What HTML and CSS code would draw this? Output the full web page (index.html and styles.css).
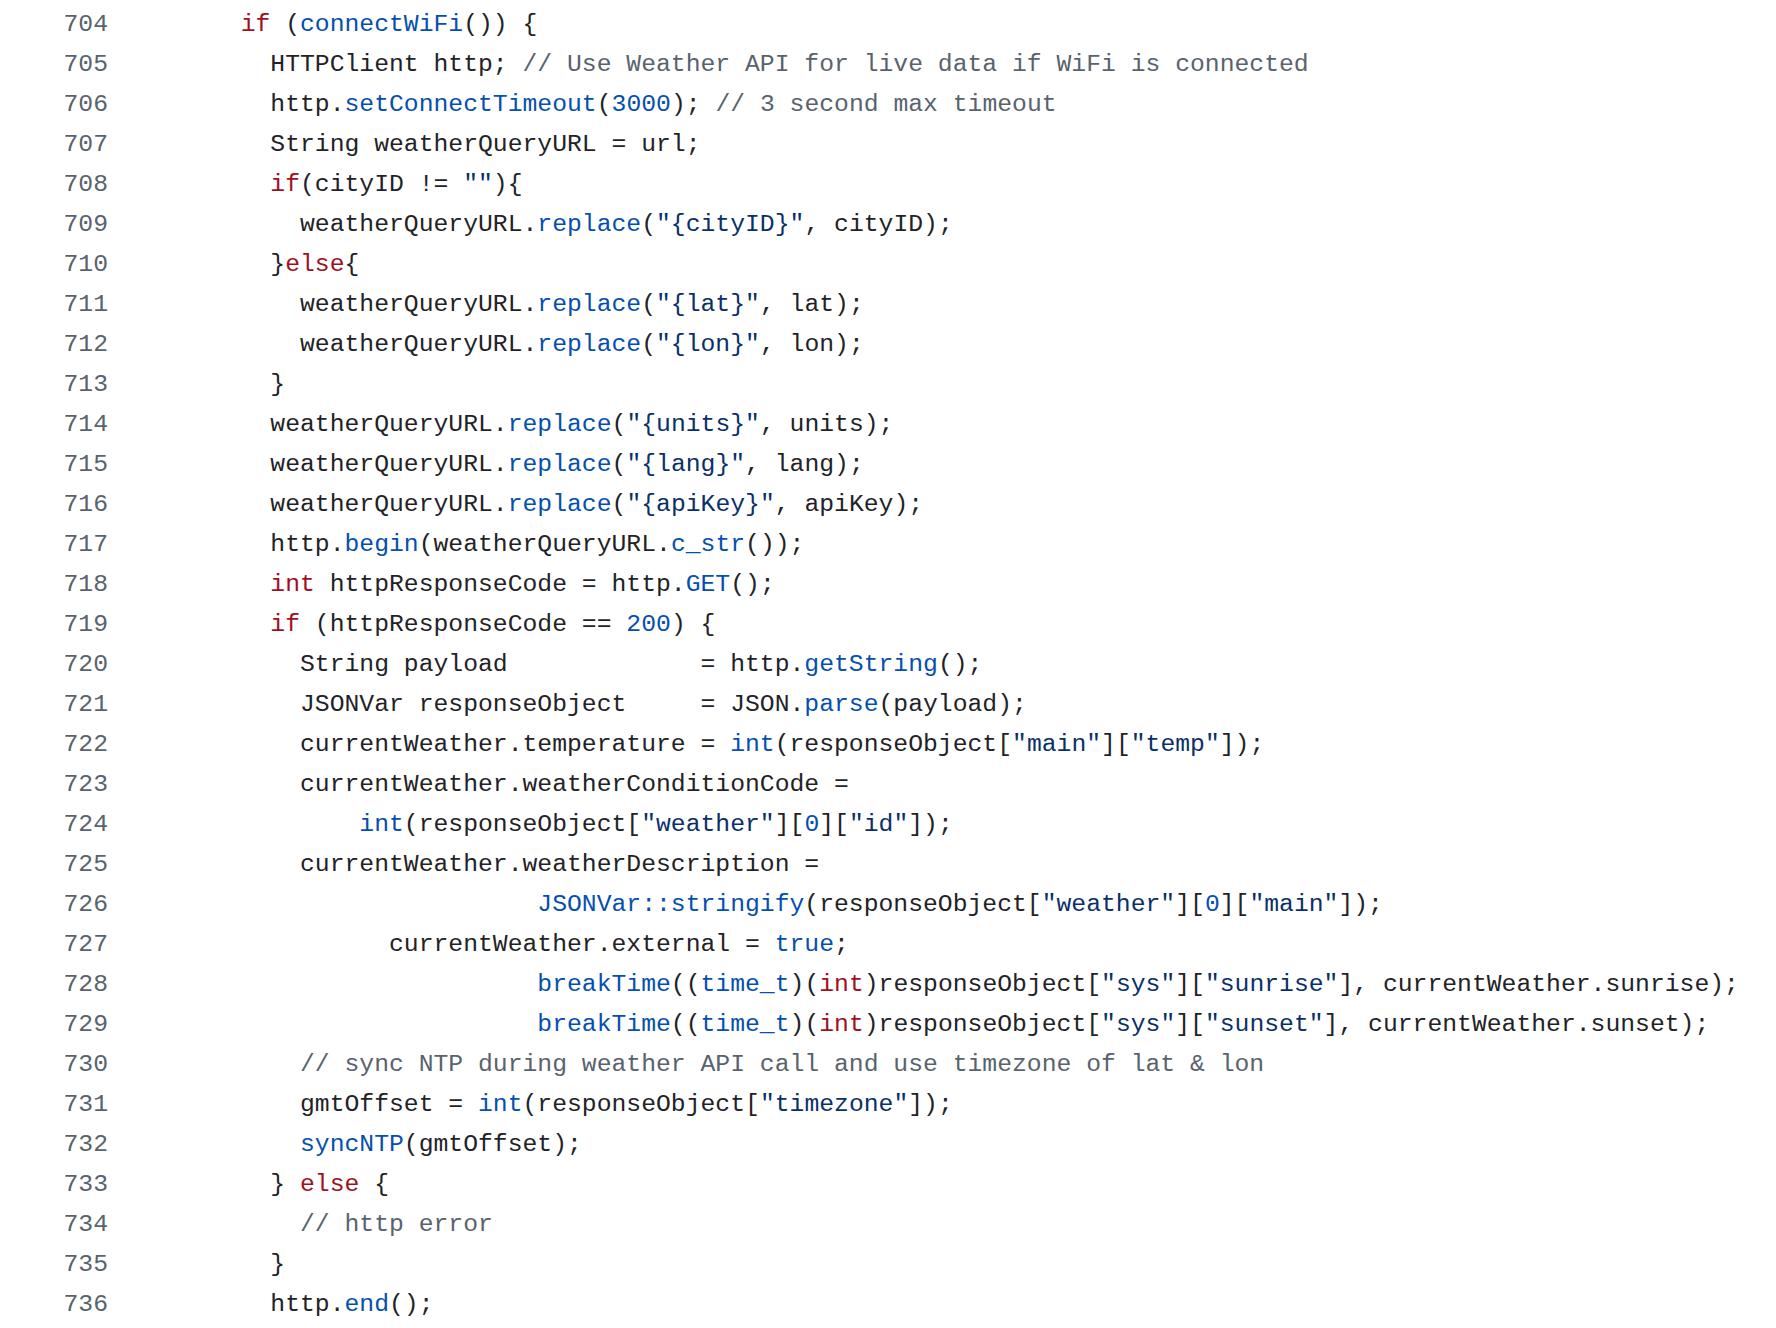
FILE: index.html
```html
<!DOCTYPE html>
<html lang="en">
<head>
<meta charset="utf-8">
<title>Code view</title>
<link rel="stylesheet" href="styles.css">
</head>
<body>
<div class="code-view">
<div class="row"><span class="ln">704</span><span class="code">        <span class="k">if</span> (<span class="f">connectWiFi</span>()) {</span></div>
<div class="row"><span class="ln">705</span><span class="code">          HTTPClient http; <span class="c">// Use Weather API for live data if WiFi is connected</span></span></div>
<div class="row"><span class="ln">706</span><span class="code">          http.<span class="f">setConnectTimeout</span>(<span class="f">3000</span>); <span class="c">// 3 second max timeout</span></span></div>
<div class="row"><span class="ln">707</span><span class="code">          String weatherQueryURL = url;</span></div>
<div class="row"><span class="ln">708</span><span class="code">          <span class="k">if</span>(cityID != <span class="s">""</span>){</span></div>
<div class="row"><span class="ln">709</span><span class="code">            weatherQueryURL.<span class="f">replace</span>(<span class="s">"{cityID}"</span>, cityID);</span></div>
<div class="row"><span class="ln">710</span><span class="code">          }<span class="k">else</span>{</span></div>
<div class="row"><span class="ln">711</span><span class="code">            weatherQueryURL.<span class="f">replace</span>(<span class="s">"{lat}"</span>, lat);</span></div>
<div class="row"><span class="ln">712</span><span class="code">            weatherQueryURL.<span class="f">replace</span>(<span class="s">"{lon}"</span>, lon);</span></div>
<div class="row"><span class="ln">713</span><span class="code">          }</span></div>
<div class="row"><span class="ln">714</span><span class="code">          weatherQueryURL.<span class="f">replace</span>(<span class="s">"{units}"</span>, units);</span></div>
<div class="row"><span class="ln">715</span><span class="code">          weatherQueryURL.<span class="f">replace</span>(<span class="s">"{lang}"</span>, lang);</span></div>
<div class="row"><span class="ln">716</span><span class="code">          weatherQueryURL.<span class="f">replace</span>(<span class="s">"{apiKey}"</span>, apiKey);</span></div>
<div class="row"><span class="ln">717</span><span class="code">          http.<span class="f">begin</span>(weatherQueryURL.<span class="f">c_str</span>());</span></div>
<div class="row"><span class="ln">718</span><span class="code">          <span class="k">int</span> httpResponseCode = http.<span class="f">GET</span>();</span></div>
<div class="row"><span class="ln">719</span><span class="code">          <span class="k">if</span> (httpResponseCode == <span class="f">200</span>) {</span></div>
<div class="row"><span class="ln">720</span><span class="code">            String payload             = http.<span class="f">getString</span>();</span></div>
<div class="row"><span class="ln">721</span><span class="code">            JSONVar responseObject     = JSON.<span class="f">parse</span>(payload);</span></div>
<div class="row"><span class="ln">722</span><span class="code">            currentWeather.temperature = <span class="f">int</span>(responseObject[<span class="s">"main"</span>][<span class="s">"temp"</span>]);</span></div>
<div class="row"><span class="ln">723</span><span class="code">            currentWeather.weatherConditionCode =</span></div>
<div class="row"><span class="ln">724</span><span class="code">                <span class="f">int</span>(responseObject[<span class="s">"weather"</span>][<span class="f">0</span>][<span class="s">"id"</span>]);</span></div>
<div class="row"><span class="ln">725</span><span class="code">            currentWeather.weatherDescription =</span></div>
<div class="row"><span class="ln">726</span><span class="code">                            <span class="f">JSONVar::stringify</span>(responseObject[<span class="s">"weather"</span>][<span class="f">0</span>][<span class="s">"main"</span>]);</span></div>
<div class="row"><span class="ln">727</span><span class="code">                  currentWeather.external = <span class="f">true</span>;</span></div>
<div class="row"><span class="ln">728</span><span class="code">                            <span class="f">breakTime</span>((<span class="f">time_t</span>)(<span class="k">int</span>)responseObject[<span class="s">"sys"</span>][<span class="s">"sunrise"</span>], currentWeather.sunrise);</span></div>
<div class="row"><span class="ln">729</span><span class="code">                            <span class="f">breakTime</span>((<span class="f">time_t</span>)(<span class="k">int</span>)responseObject[<span class="s">"sys"</span>][<span class="s">"sunset"</span>], currentWeather.sunset);</span></div>
<div class="row"><span class="ln">730</span><span class="code">            <span class="c">// sync NTP during weather API call and use timezone of lat &amp; lon</span></span></div>
<div class="row"><span class="ln">731</span><span class="code">            gmtOffset = <span class="f">int</span>(responseObject[<span class="s">"timezone"</span>]);</span></div>
<div class="row"><span class="ln">732</span><span class="code">            <span class="f">syncNTP</span>(gmtOffset);</span></div>
<div class="row"><span class="ln">733</span><span class="code">          } <span class="k">else</span> {</span></div>
<div class="row"><span class="ln">734</span><span class="code">            <span class="c">// http error</span></span></div>
<div class="row"><span class="ln">735</span><span class="code">          }</span></div>
<div class="row"><span class="ln">736</span><span class="code">          http.<span class="f">end</span>();</span></div>
</div>
</body>
</html>
```

FILE: styles.css
```css
html, body {
  margin: 0;
  padding: 0;
  background: #ffffff;
}

.code-view {
  padding-top: 4px;
  font-family: "Liberation Mono", "DejaVu Sans Mono", monospace;
  font-size: 24.72px;
  line-height: 40px;
  color: #1f2328;
}

.row {
  display: grid;
  grid-template-columns: 108px 1fr;
  column-gap: 14px;
  height: 40px;
}

.ln {
  text-align: right;
  color: #59636e;
}

.code {
  white-space: pre;
}

.k { color: #a0111f; }
.f { color: #0550ae; }
.s { color: #0a3069; }
.c { color: #59636e; }
```
